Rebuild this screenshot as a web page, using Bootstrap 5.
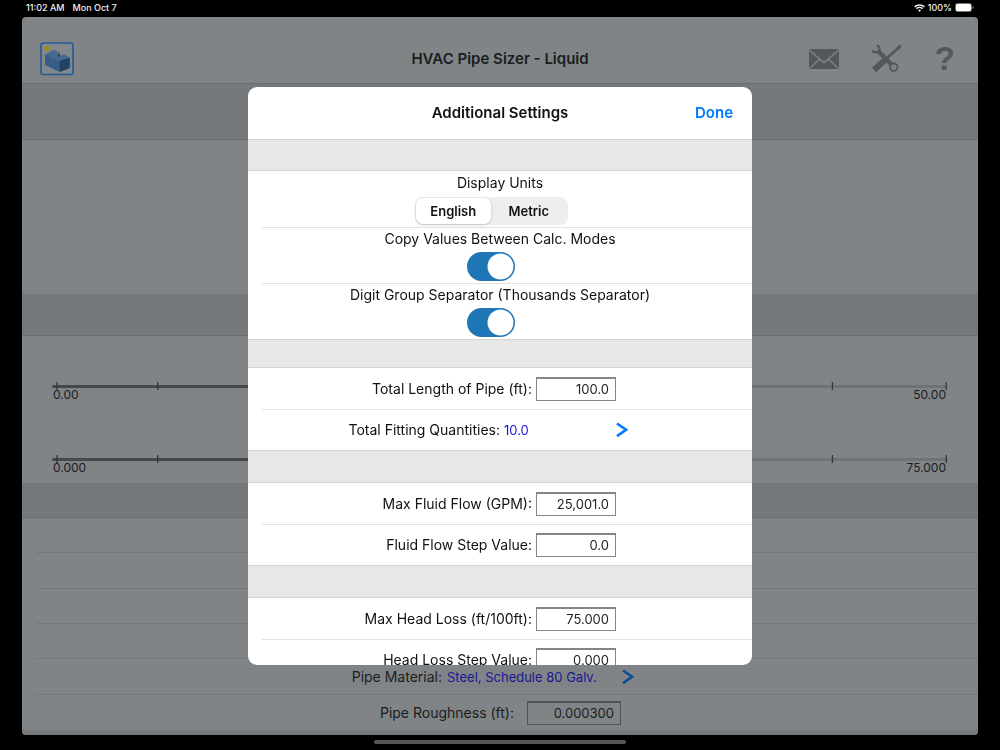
<!DOCTYPE html>
<html lang="en">
<head>
<meta charset="utf-8">
<meta name="viewport" content="width=device-width, initial-scale=1">
<title>HVAC Pipe Sizer - Liquid</title>
<link href="https://cdn.jsdelivr.net/npm/bootstrap@5.3.0/dist/css/bootstrap.min.css" rel="stylesheet">
<style>
  body { font-family: Inter, "Liberation Sans", sans-serif; font-size: 14px; line-height: 24px; color: #111; background: #000; }
  .status { height: 17px; padding: 0 26px; font-size: 9px; line-height: 15px; font-weight: 500; color: #f0f0f0; }
  .status-right { height: 15px; gap: 3px; }
  .app { margin: 0 22px; border-radius: 4px; background: #808486; overflow: hidden; color: #1b1d1f; }
  .app-head { height: 67px; padding: 18px 18px 0; border-bottom: 1px solid #6b6f71; }
  .app-head h1, .sheet h2 { font-size: 15px; line-height: 24px; font-weight: 600; margin: 0; }
  .side { flex: 1 1 0; }
  .tools { gap: 32px; }
  .tool { border: 0; padding: 0; background: none; color: #54585b; display: flex; }
  .tool.help { padding-right: 5px; font: bold 33px/32px "Liberation Sans", sans-serif; }
  .strip { background: #75797b; border-bottom: 1px solid #6b6f71; }
  .strip-lg { height: 56px; }
  .strip-md { height: 42px; }
  .strip-sm { height: 35px; }
  .results { height: 154px; }
  .slider-row { height: 73px; padding: 0 30px; }
  .sliders { height: 147px; padding-top: 46px; }
  .track { position: relative; height: 8px; }
  .track svg { position: absolute; inset: 0; }
  .track input { appearance: none; display: block; width: 100%; height: 8px; margin: 0; background: none; }
  .track input::-webkit-slider-runnable-track { height: 3px; border-radius: 2px; background: linear-gradient(90deg, #45494b 50%, #6f7375 50%); }
  .track input::-webkit-slider-thumb { appearance: none; width: 24px; height: 24px; margin-top: -11px; border-radius: 50%; background: #808486; }
  .ends { font-size: 12px; line-height: 9px; padding: 0 2px 0 1px; }
  .line-row { height: 35px; margin-left: 14px; border-bottom: 1px solid #74787a; }
  .line-row.tall { height: 36px; }
  .app-label { text-align: right; }
  .value-link { font-size: 13px; color: #1616e6; text-decoration: none; }
  .app .value-link { color: #1b1994; }
  .field { height: 24px; padding: 0 6px; border: 1px solid #858585; border-top-width: 2px; border-radius: 0; background: #fff; font-size: 13px; text-align: right; color: #222; }
  .app .field { width: 94px; background: none; border-color: #505456; color: #1b1d1f; }
  .field:focus { outline: 1px solid #007aff; }
  .material { display: grid; grid-template-columns: 406px 170px auto; column-gap: 5px; align-items: center; }
  .rough { display: grid; grid-template-columns: 478px auto; column-gap: 13px; align-items: center; }
  .foot { height: 5px; background: #75797b; }
  .home { width: 252px; height: 4px; margin: 5px auto; border-radius: 2px; background: #555; }
  .overlay { position: fixed; inset: 17px 22px 15px; display: flex; align-items: center; justify-content: center; }
  .sheet { width: 504px; max-width: 100%; height: 578px; max-height: 100%; border-radius: 9px; background: #fff; overflow: hidden; }
  .sheet-head { height: 52px; padding: 0 19px; flex: none; }
  .done { border: 0; padding: 0; background: none; color: #007aff; font-size: 15px; font-weight: 600; }
  .sheet-body { overflow-y: auto; scrollbar-width: none; }
  .gap-band { height: 33px; background: #e7e7e7; border-top: 1px solid #d4d4d4; border-bottom: 1px solid #d4d4d4; }
  .gap-band.top { height: 32px; }
  .gap-band.low { height: 29px; }
  .set-row { height: 56px; }
  .set-row .ctl { padding-right: 18px; }
  .set-row + .set-row, .num-row + .num-row { box-shadow: inset 0 1px #e2e2e2; margin-left: 14px; }
  .set-row + .set-row { padding-right: 14px; }
  .num-row { height: 41px; display: grid; grid-template-columns: 1fr 80px 132px; column-gap: 4px; align-items: center; }
  .num-row.fit { grid-template-columns: 1fr 108px 136px; }
  .num-row label, .fit span { text-align: right; }
  .seg { width: 153px; height: 28px; margin-top: 2px; padding: 1px; border-radius: 8px; background: #eee; }
  .seg .seg-btn { flex: 1 1 0; font-size: 13px; line-height: 26px; font-weight: 600; text-align: center; border-radius: 7px; }
  .seg .btn-check:checked + .seg-btn { background: #fff; box-shadow: 0 1px 3px #0003; }
  .form-check-input.toggle { width: 48px; height: 29px; margin: 1px 0 0; border: 0; border-radius: 15px; background-color: #1f76b7; background-size: 27px; background-position: right 1px center; background-repeat: no-repeat;
    background-image: url("data:image/svg+xml,%3Csvg xmlns='http://www.w3.org/2000/svg' viewBox='0 0 27 27'%3E%3Ccircle cx='13.5' cy='13.5' r='13' fill='white'/%3E%3C/svg%3E"); }
</style>
</head>
<body class="min-vh-100">
<div class="status d-flex justify-content-between">
  <div><span class="me-2">11:02 AM</span><span>Mon Oct 7</span></div>
  <div class="status-right d-flex align-items-center">
    <svg width="11" height="8" viewBox="0 0 11 8" fill="none" stroke="#eee" stroke-width="1.5"><path d="M.6 2.9a7 7 0 0 1 9.8 0M2.4 4.8a4.4 4.4 0 0 1 6.2 0"/><path d="M5.5 7.8 3.9 6.2a2.3 2.3 0 0 1 3.2 0z" fill="#eee" stroke="none"/></svg>
    <span>100%</span>
    <svg width="19" height="9" viewBox="0 0 19 9"><rect x=".5" y=".5" width="16" height="8" rx="2" fill="none" stroke="#777"/><rect x="1" y="1" width="15" height="7" rx="1.3" fill="#fff"/><path d="M17.5 3v3q1.3-.4 1.3-1.5T17.5 3" fill="#777"/></svg>
  </div>
</div>

<main class="app">
  <header class="app-head d-flex align-items-center">
    <div class="side">
      <button class="tool" type="button" aria-label="Home">
        <svg width="34" height="34" viewBox="0 0 34 34"><rect x="1" y="1" width="32" height="31.5" rx="2.5" fill="#83888b" stroke="#235a98" stroke-width="1.6"/><circle cx="7" cy="6.4" r="2.6" fill="#a08b16"/><path d="m5 12.7 9-4.7 6 3.3v3l4-2 5.7 3.4V26l-10 4L5 23.3z" fill="#3b618b"/><path d="m19.7 18.5 10-2.8V26l-10 4z" fill="#22405f"/><path d="m5 12.7 9-4.7 6 3.3-2.5 1.9 1.5 1.5 5-2.4 5.7 3.4-10 2.8z" fill="#456a92"/><path d="m17.5 13.2 2.5-1.9v3l-1.5.7z" fill="#243f5c"/><path d="m5 16.2 14.7 6 10-3.2M5 19.8l14.7 6.2 10-3.6M10 15v10.5M15 17v10.8" fill="none" stroke="#2d4e75" stroke-width=".5"/></svg>
      </button>
    </div>
    <h1>HVAC Pipe Sizer - Liquid</h1>
    <div class="side tools d-flex justify-content-end align-items-center">
      <button class="tool" type="button" aria-label="Email">
        <svg width="30" height="20" viewBox="0 0 30 20"><rect width="30" height="20" rx="1" fill="currentColor"/><path d="m0 .7 15 13.1L30 .7M.3 19.6l10.5-9.5m18.9 9.5-10.5-9.5" fill="none" stroke="#808486" stroke-width="1.4"/></svg>
      </button>
      <button class="tool" type="button" aria-label="Tools">
        <svg width="32" height="30" viewBox="0 0 32 30" fill="none" stroke="currentColor"><path d="M3 26 16 14" stroke-width="6"/><path d="M14.5 15.5 27 4.2" stroke-width="2.5"/><path d="m25.8 4 2.8-2.6 1.2 1.2-2.4 3z" fill="currentColor" stroke-width="1.2"/><path d="m7 7 14.5 14.5" stroke-width="4.4"/><path d="M1.2 6.5C3.5 9.6 8.6 8.2 8.5 4.6 8.4 2.8 7.2 1.9 5.8 1.3" stroke-width="2.4"/><circle cx="22.8" cy="23.2" r="3.7" fill="#808486" stroke-width="2"/></svg>
      </button>
      <button class="tool help" type="button" aria-label="Help">?</button>
    </div>
  </header>
  <div class="strip strip-lg"></div>
  <section class="results"></section>
  <div class="strip strip-md"></div>
  <section class="sliders">
    <div class="slider-row">
      <div class="track">
        <input type="range" min="0" max="50" value="25" aria-label="Fluid flow">
        <svg width="100%" height="8" stroke="#33373a" stroke-width="1.3"><path d="M5 0v8"/><line x1="11.8%" x2="11.8%" y1="0" y2="8"/><line x1="87.1%" x2="87.1%" y1="0" y2="8"/><line x1="99.8%" x2="99.8%" y1="0" y2="8"/></svg>
      </div>
      <div class="ends d-flex justify-content-between"><span>0.00</span><span>50.00</span></div>
    </div>
    <div class="slider-row">
      <div class="track">
        <input type="range" min="0" max="75" value="37" aria-label="Head loss">
        <svg width="100%" height="8" stroke="#33373a" stroke-width="1.3"><path d="M5 0v8"/><line x1="11.8%" x2="11.8%" y1="0" y2="8"/><line x1="87.1%" x2="87.1%" y1="0" y2="8"/><line x1="99.8%" x2="99.8%" y1="0" y2="8"/></svg>
      </div>
      <div class="ends d-flex justify-content-between"><span>0.000</span><span>75.000</span></div>
    </div>
  </section>
  <div class="strip strip-sm"></div>
  <section>
    <div class="line-row"></div>
    <div class="line-row tall"></div>
    <div class="line-row"></div>
    <div class="line-row"></div>
    <div class="line-row tall material">
      <span class="app-label">Pipe Material:</span>
      <a class="value-link" href="#">Steel, Schedule 80 Galv.</a>
      <svg width="12" height="16" viewBox="0 0 12 16" fill="none" stroke="#0c4c9b" stroke-width="2.6"><path d="m1 1.5 9 6.3-9 6.3"/></svg>
    </div>
    <div class="line-row rough border-0">
      <label class="app-label" for="rough">Pipe Roughness (ft):</label>
      <input class="field" id="rough" type="text" value="0.000300">
    </div>
    <div class="foot"></div>
  </section>
</main>
<div class="home"></div>

<div class="overlay">
  <div class="sheet d-flex flex-column" role="dialog" aria-labelledby="sheetTitle">
    <header class="sheet-head d-flex align-items-center">
      <div class="side"></div>
      <h2 id="sheetTitle">Additional Settings</h2>
      <div class="side text-end"><button class="done" type="button">Done</button></div>
    </header>
    <div class="sheet-body">
      <div class="gap-band top"></div>
      <div class="set-row d-flex flex-column align-items-center">
        <span>Display Units</span>
        <div class="ctl">
          <div class="seg d-flex" role="group" aria-label="Display Units">
            <input class="btn-check" type="radio" name="units" id="english" checked><label class="seg-btn" for="english">English</label>
            <input class="btn-check" type="radio" name="units" id="metric"><label class="seg-btn" for="metric">Metric</label>
          </div>
        </div>
      </div>
      <div class="set-row d-flex flex-column align-items-center">
        <label for="copy">Copy Values Between Calc. Modes</label>
        <div class="ctl d-flex"><input class="form-check-input toggle" id="copy" type="checkbox" role="switch" checked></div>
      </div>
      <div class="set-row d-flex flex-column align-items-center">
        <label for="digits">Digit Group Separator (Thousands Separator)</label>
        <div class="ctl d-flex"><input class="form-check-input toggle" id="digits" type="checkbox" role="switch" checked></div>
      </div>
      <div class="gap-band low"></div>
      <div class="num-row"><label for="len">Total Length of Pipe (ft):</label><input class="field" id="len" type="text" value="100.0"></div>
      <div class="num-row fit"><span>Total Fitting Quantities:</span><a class="value-link" href="#">10.0</a>
        <svg width="12" height="16" viewBox="0 0 12 16" fill="none" stroke="#007aff" stroke-width="2.6"><path d="m1 1.5 9 6.3-9 6.3"/></svg></div>
      <div class="gap-band"></div>
      <div class="num-row"><label for="flow">Max Fluid Flow (GPM):</label><input class="field" id="flow" type="text" value="25,001.0"></div>
      <div class="num-row"><label for="flowStep">Fluid Flow Step Value:</label><input class="field" id="flowStep" type="text" value="0.0"></div>
      <div class="gap-band"></div>
      <div class="num-row"><label for="head">Max Head Loss (ft/100ft):</label><input class="field" id="head" type="text" value="75.000"></div>
      <div class="num-row"><label for="headStep">Head Loss Step Value:</label><input class="field" id="headStep" type="text" value="0.000"></div>
    </div>
  </div>
</div>
<script src="https://cdn.jsdelivr.net/npm/bootstrap@5.3.0/dist/js/bootstrap.bundle.min.js"></script>
</body>
</html>
